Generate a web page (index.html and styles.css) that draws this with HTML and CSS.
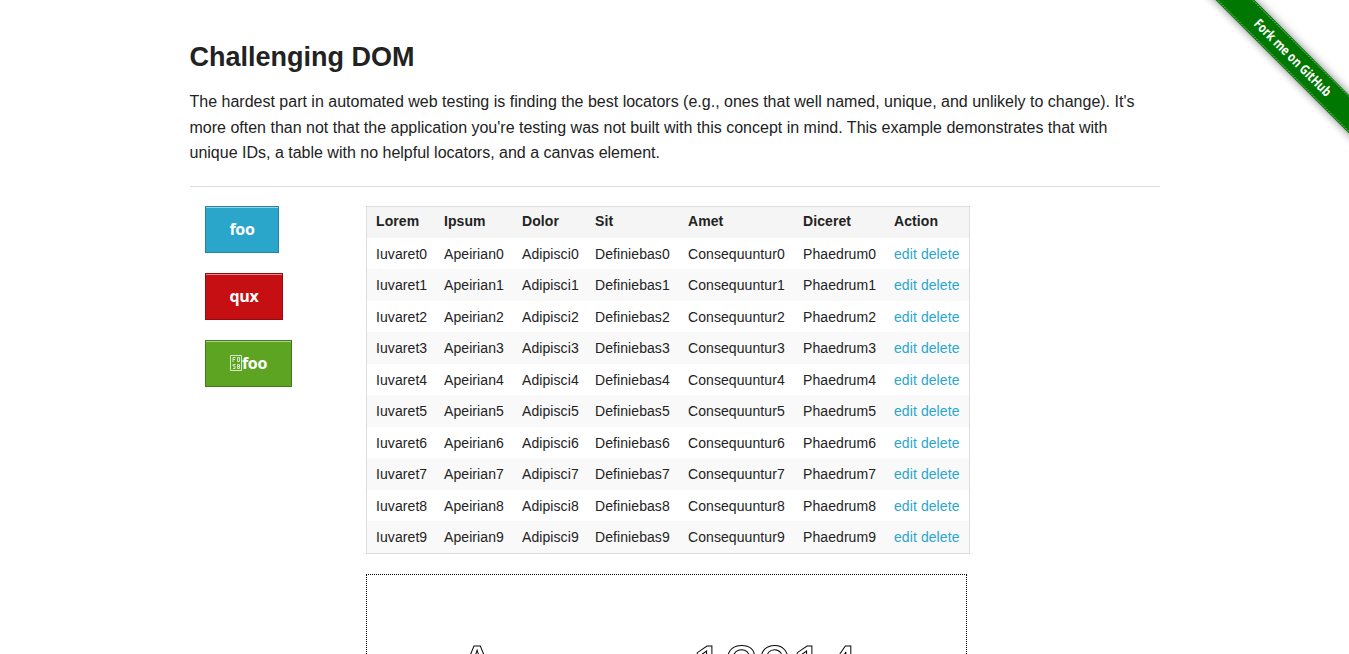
FILE: index.html
```html
<!DOCTYPE html>
<html lang="en">
<head>
<meta charset="utf-8">
<title>The Internet</title>
<link rel="stylesheet" href="styles.css">
</head>
<body>
<a class="ribbon" href="#" aria-label="Fork me on GitHub">
<svg width="149" height="149" viewBox="0 0 149 149">
<defs><filter id="shade" x="-20%" y="-20%" width="140%" height="140%"><feGaussianBlur stdDeviation="4.5"/></filter></defs>
<path class="ribbon-shadow" d="M5-10 159 144V104L45-10Z" filter="url(#shade)"/>
<path class="ribbon-band" d="M5.500-10 159 143.500V105L44.500-10Z"/>
<path class="ribbon-stitch" d="M7.500-10 159 141.500M42.500-10 159 106.500"/>
<text class="ribbon-text" transform="translate(53 24.500) rotate(45)" textLength="103" lengthAdjust="spacingAndGlyphs">Fork me on GitHub</text>
</svg>
</a>
<main class="page">
<h3 class="title">Challenging DOM</h3>
<p class="intro">The hardest part in automated web testing is finding the best locators (e.g., ones that well named, unique, and unlikely to change). It's more often than not that the application you're testing was not built with this concept in mind. This example demonstrates that with unique IDs, a table with no helpful locators, and a canvas element.</p>
<hr class="rule">
<div class="columns">
<div class="actions">
<a class="button button-foo">foo</a>
<a class="button button-alert">qux</a>
<a class="button button-success"><svg class="missing" width="12" height="16" viewBox="0 0 12 16"><path d="M.5.500h11v15H.5zM3 7V2.500h2.500M3 4.500h2M7.500 2.500H9.500V6.500H7.500zM5.500 9.500H3V11h2v2.500H3M7.500 9.500h2v4h-2zM7.500 11.500h2"/></svg>foo</a>
</div>
<div class="content">
<table class="grid">
<colgroup><col class="c1"><col class="c2"><col class="c3"><col class="c4"><col class="c5"><col class="c6"><col class="c7"></colgroup>
<thead><tr><th>Lorem</th><th>Ipsum</th><th>Dolor</th><th>Sit</th><th>Amet</th><th>Diceret</th><th>Action</th></tr></thead>
<tbody id="rows"></tbody>
</table>
<div class="answer"><svg width="599" height="200"><text class="answer-text" x="90" y="111.500">Answer: <tspan dx="1">12914</tspan></text></svg></div>
</div>
</div>
</main>
<script src="rows.js"></script>
</body>
</html>
```
FILE: styles.css
```css
* { box-sizing: border-box; }
body { margin: 0; height: 654px; overflow: hidden; background: #fff; color: #222; font-family: "Liberation Sans", Arial, sans-serif; font-size: 16px; }
.ribbon { position: absolute; top: 0; right: 0; width: 149px; height: 149px; }
.ribbon svg { display: block; }
.ribbon-shadow { fill: #000; opacity: .45; }
.ribbon-band { fill: #070; }
.ribbon-stitch { fill: none; stroke: #8cc08c; stroke-width: 1; stroke-dasharray: 2 1; }
.ribbon-text { fill: #fff; font: bold 13.5px "Open Sans", sans-serif; }
.page { width: 970.5px; margin-left: 189.5px; padding-top: 38px; }
.title { margin: 0 0 13px; font-size: 27px; line-height: 38px; font-weight: bold; }
.intro { margin: 0; padding-right: 10px; line-height: 25.6px; }
.rule { height: 1px; margin: 20px 0 19px; border: 0; background: #ddd; }
.columns { display: flex; padding-left: .5px; }
.actions { width: 176px; padding-left: 15px; display: flex; flex-direction: column; align-items: flex-start; gap: 20px; }
.button { display: flex; align-items: center; justify-content: center; height: 47px; border: 1px solid; box-shadow: inset 0 1px 0 rgba(255,255,255,.5); color: #fff; font: bold 16px "Open Sans", sans-serif; letter-spacing: -.3px; }
.button-foo { width: 74px; background: #2ba6cb; border-color: #2284a1; }
.button-alert { width: 78px; background: #c60f13; border-color: #970b0e; }
.button-success { width: 87px; background: #5da423; border-color: #457a1a; }
.missing { fill: none; stroke: #d5e8c7; stroke-width: 1; }
.grid { width: 604px; margin: 0 0 20px; border: 1px solid #ddd; border-spacing: 0; font-size: 14px; letter-spacing: .08px; table-layout: fixed; }
.c1 { width: 68px; }
.c2 { width: 78px; }
.c3 { width: 73px; }
.c4 { width: 93px; }
.c5 { width: 115px; }
.c6 { width: 91px; }
.c7 { width: 84px; }
.grid th { height: 31px; padding: 0 0 2px 9px; background: #f5f5f5; text-align: left; }
.grid td { height: 31.5px; padding: 0 0 0 9px; white-space: nowrap; }
.grid tbody tr:nth-child(even) { background: #f9f9f9; }
.link { color: #2ba6cb; text-decoration: none; }
.answer { width: 601px; height: 202px; border: 1px dotted #000; }
.answer svg { display: block; }
.answer-text { font: 60px "Liberation Sans", Arial, sans-serif; fill: none; stroke: #000; stroke-width: 1; }
```
FILE: rows.js
```js
const words = ["Iuvaret", "Apeirian", "Adipisci", "Definiebas", "Consequuntur", "Phaedrum"];
document.getElementById("rows").innerHTML = Array.from({ length: 10 }, (_, i) =>
  "<tr>" + words.map(w => `<td>${w}${i}</td>`).join("") +
  '<td><a class="link" href="#">edit</a> <a class="link" href="#">delete</a></td></tr>').join("");
```
